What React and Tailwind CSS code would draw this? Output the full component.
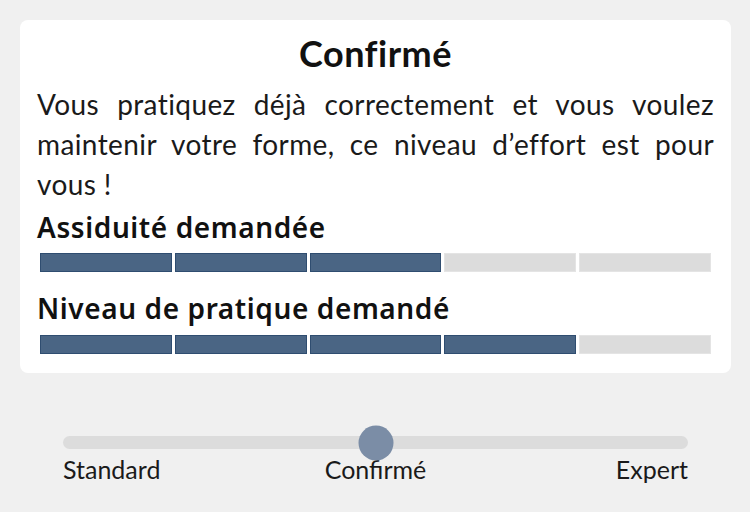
const font = { fontFamily: 'Lato, "Noto Sans", sans-serif' };
const headFont = { fontFamily: '"Noto Sans", Lato, sans-serif' };

const Bar = ({ filled }) => (
  <div className="mx-[3px] flex h-[19px] gap-[3px]">
    {[0, 1, 2, 3, 4].map((i) => (
      <div
        key={i}
        className={
          i < filled
            ? 'flex-1 border border-[#2f4d70] bg-[#4a6584]'
            : 'flex-1 border border-[#e4e4e4] bg-[#dcdcdc]'
        }
      />
    ))}
  </div>
);

const App = () => {
  return (
    <div className="h-[512px] w-[750px] bg-[#f0f0f0] pt-[20px] pl-[20px] pr-[19px]" style={font}>
      <div className="rounded-[8px] bg-white px-[17px] pt-[13px] pb-[19px] text-[#111]">
        <h1 className="text-center text-[36px] leading-[40px] font-bold tracking-[0.5px]">Confirmé</h1>
        <div className="mt-[11px] text-[28px] leading-[40px] text-[#1a1a1a] tracking-[0.4px]">
          <div className="text-justify [text-align-last:justify]">Vous pratiquez déjà correctement et vous voulez</div>
          <div className="text-justify [text-align-last:justify]">maintenir votre forme, ce niveau d’effort est pour</div>
          <div>vous !</div>
        </div>
        <h2 className="mt-[5px] text-[28px] leading-[36px] font-semibold tracking-[0.6px]" style={headFont}>Assiduité demandée</h2>
        <div className="mt-[8px]">
          <Bar filled={3} />
        </div>
        <h2 className="mt-[18px] text-[28px] leading-[36px] font-semibold tracking-[0.6px]" style={headFont}>Niveau de pratique demandé</h2>
        <div className="mt-[9px]">
          <Bar filled={4} />
        </div>
      </div>

      <div className="mx-[43px] mt-[63px]">
        <div className="relative h-[13px] rounded-full bg-[#dcdcdc]">
          <div className="absolute top-1/2 left-1/2 h-[35px] w-[35px] -translate-x-1/2 -translate-y-1/2 rounded-full bg-[#7b8da6]" />
        </div>
        <div className="mt-[5px] grid grid-cols-3 text-[25px] leading-[30px] text-[#1a1a1a]">
          <span className="text-left">Standard</span>
          <span className="text-center">Confirmé</span>
          <span className="text-right">Expert</span>
        </div>
      </div>
    </div>
  );
};

export default App;
